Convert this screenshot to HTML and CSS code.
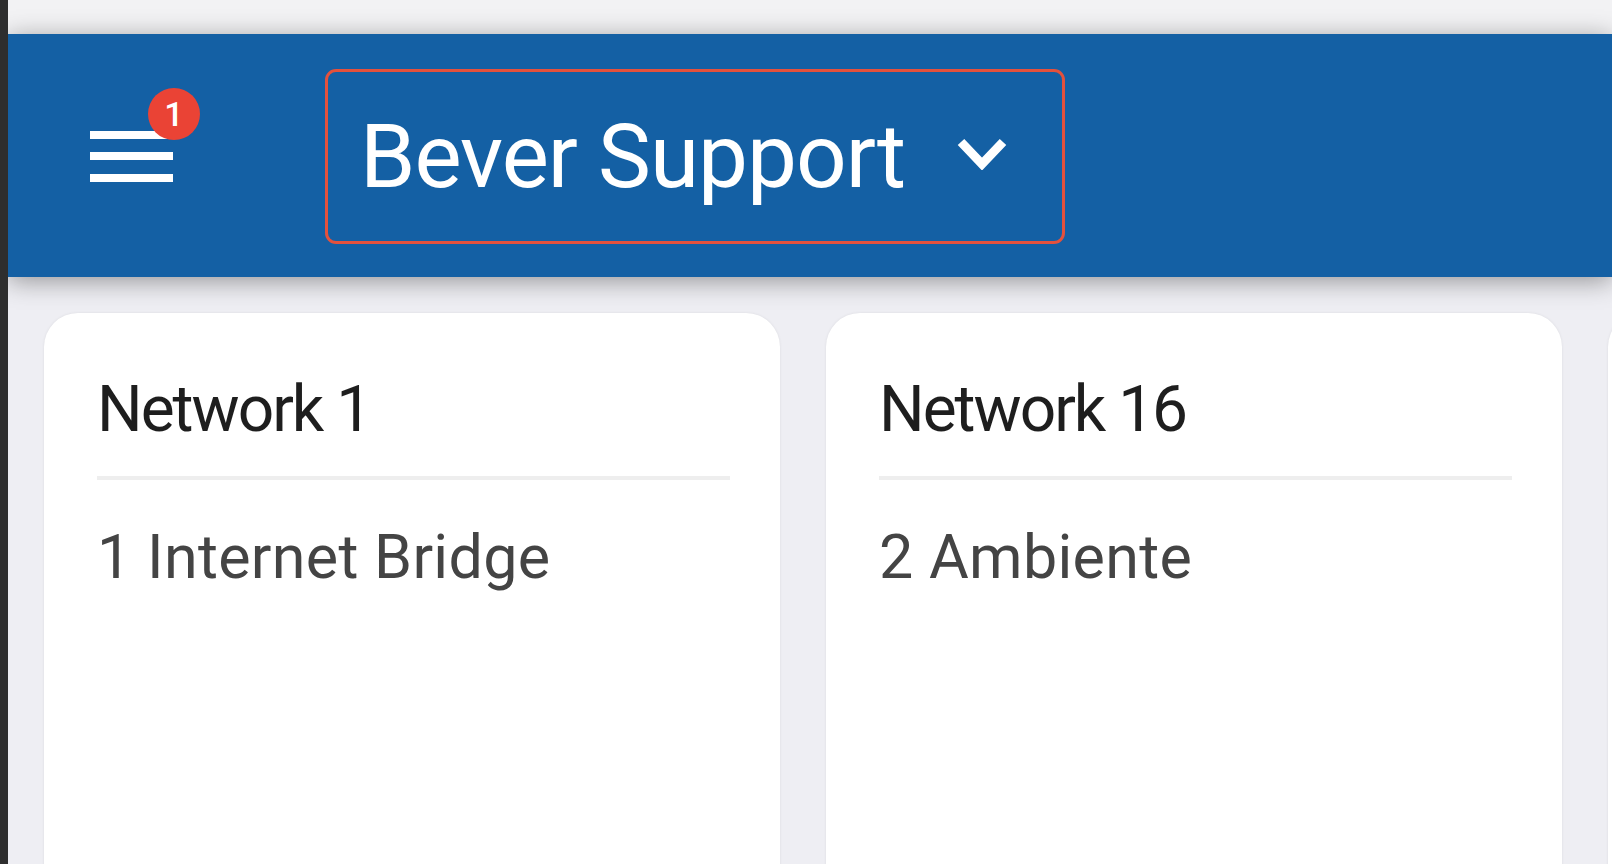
FILE: index.html
```html
<!DOCTYPE html>
<html>
<head>
<meta charset="utf-8">
<link rel="stylesheet" href="styles.css">
</head>
<body>
<div class="edge"></div>
<div class="app">
  <div class="topband"></div>
  <header class="header">
    <div class="menu">
      <span class="bar"></span>
      <span class="bar"></span>
      <span class="bar"></span>
      <span class="badge">1</span>
    </div>
    <div class="picker">
      <span class="picker-label">Bever Support</span>
      <svg class="chev" width="52" height="34" viewBox="0 0 52 34"><polyline points="5,6 26,28 47,6" fill="none" stroke="#fff" stroke-width="9" stroke-linejoin="miter" stroke-linecap="butt"/></svg>
    </div>
  </header>
  <main class="content">
    <section class="card">
      <h2 class="card-title">Network 1</h2>
      <div class="divider"></div>
      <p class="card-sub">1 Internet Bridge</p>
    </section>
    <section class="card">
      <h2 class="card-title">Network 16</h2>
      <div class="divider"></div>
      <p class="card-sub">2 Ambiente</p>
    </section>
    <section class="card"></section>
  </main>
</div>
</body>
</html>
```
FILE: styles.css
```css
* { box-sizing: border-box; }
html, body { margin: 0; padding: 0; width: 1612px; height: 864px; overflow: hidden; }
body {
  display: flex;
  font-family: Roboto, "Liberation Sans", Arial, sans-serif;
  background: #eeeef3;
}
.edge {
  width: 8px;
  flex-shrink: 0;
  height: 864px;
  background: #2e2e2e;
  position: relative;
  z-index: 3;
}
.app {
  flex: 1;
  display: flex;
  flex-direction: column;
  min-width: 0;
  height: 864px;
}
.topband {
  height: 34px;
  background: #f2f2f4;
  flex-shrink: 0;
}
.header {
  height: 243px;
  flex-shrink: 0;
  background: #1460a4;
  display: flex;
  align-items: center;
  padding-left: 82px;
  box-shadow: 0 4px 24px rgba(0,0,0,0.38);
  position: relative;
  z-index: 2;
}
.menu {
  position: relative;
  width: 83px;
  display: flex;
  flex-direction: column;
  gap: 13.5px;
  margin-top: 1px;
}
.bar {
  display: block;
  height: 8px;
  background: #fff;
}
.badge {
  position: absolute;
  left: 58px;
  top: -43px;
  width: 52px;
  height: 52px;
  border-radius: 50%;
  background: #ea4335;
  color: #fff;
  font-weight: 500;
  font-size: 34px;
  line-height: 52px;
  text-align: center;
}
.picker {
  margin-left: 152px;
  height: 175px;
  width: 740px;
  border: 3px solid #e4513c;
  border-radius: 11px;
  display: flex;
  align-items: center;
  padding-left: 32px;
  margin-top: 1px;
}
.picker-label {
  color: #fff;
  font-size: 89px;
  line-height: 89px;
  letter-spacing: -1px;
}
.chev {
  margin-left: 51px;
  margin-top: -6px;
}
.content {
  flex: 1;
  display: flex;
  gap: 46px;
  padding: 36px 0 0 36px;
  overflow: hidden;
}
.card {
  flex: 0 0 736px;
  background: #fff;
  border-radius: 34px 34px 0 0;
  padding: 65px 50px 0 53px;
  box-shadow: 0 0 3px rgba(0,0,0,0.08);
  height: 620px;
}
.card-title {
  margin: 0;
  font-size: 64px;
  line-height: 64px;
  font-weight: 400;
  color: #1e1e1e;
  letter-spacing: -2px;
}
.divider {
  height: 4px;
  background: #eeeeee;
  margin-top: 34px;
}
.card-sub {
  margin: 47px 0 0;
  font-size: 61px;
  line-height: 61px;
  color: #444;
  letter-spacing: 0.3px;
}
```
